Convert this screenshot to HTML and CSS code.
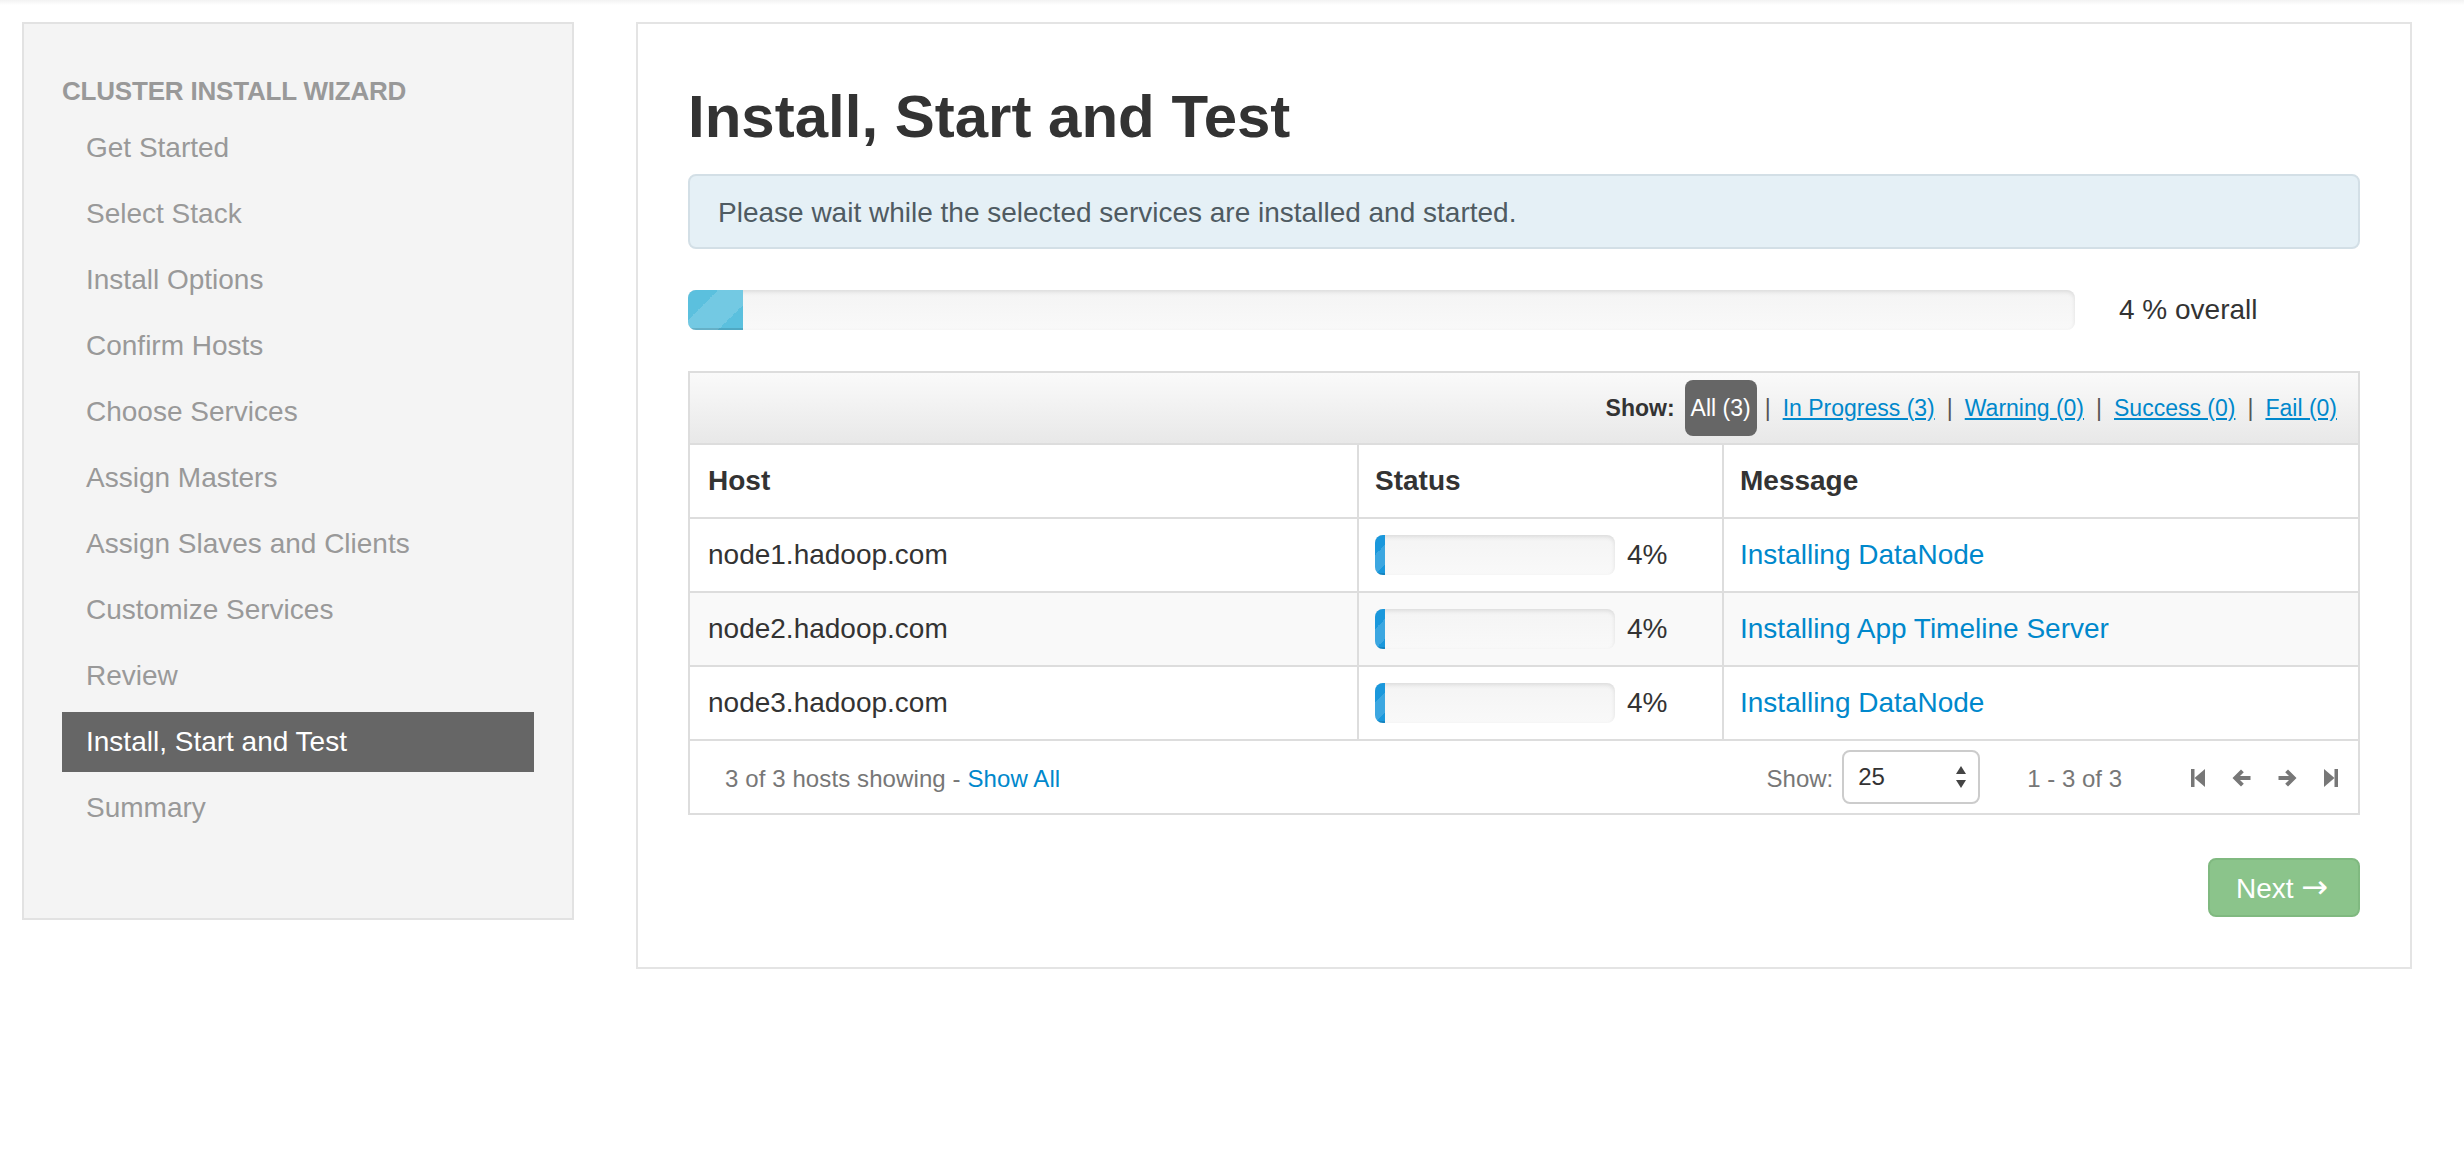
FILE: index.html
```html
<!DOCTYPE html>
<html lang="en">
<head>
<meta charset="utf-8">
<title>Cluster Install Wizard - Install, Start and Test</title>
<link rel="stylesheet" href="styles.css">
</head>
<body>
<div class="page">
  <aside class="sidebar">
    <div class="nav-header">CLUSTER INSTALL WIZARD</div>
    <ul class="nav-list">
      <li><a href="#">Get Started</a></li>
      <li><a href="#">Select Stack</a></li>
      <li><a href="#">Install Options</a></li>
      <li><a href="#">Confirm Hosts</a></li>
      <li><a href="#">Choose Services</a></li>
      <li><a href="#">Assign Masters</a></li>
      <li><a href="#">Assign Slaves and Clients</a></li>
      <li><a href="#">Customize Services</a></li>
      <li><a href="#">Review</a></li>
      <li class="active"><a href="#">Install, Start and Test</a></li>
      <li><a href="#">Summary</a></li>
    </ul>
  </aside>

  <main class="panel">
    <h2 class="title">Install, Start and Test</h2>
    <div class="alert">Please wait while the selected services are installed and started.</div>

    <div class="overall">
      <div class="progress">
        <div class="bar bar-info" style="width:4%"></div>
      </div>
      <div class="overall-text">4 % overall</div>
    </div>

    <div class="hosts">
      <div class="toolbar">
        <span class="show-label">Show:</span>
        <span class="pill">All (3)</span>
        <span class="sep">|</span>
        <a href="#" class="filter">In Progress (3)</a>
        <span class="sep">|</span>
        <a href="#" class="filter">Warning (0)</a>
        <span class="sep">|</span>
        <a href="#" class="filter">Success (0)</a>
        <span class="sep">|</span>
        <a href="#" class="filter">Fail (0)</a>
      </div>
      <table class="host-table">
        <thead>
          <tr>
            <th class="c-host">Host</th>
            <th class="c-status">Status</th>
            <th class="c-msg">Message</th>
          </tr>
        </thead>
        <tbody>
          <tr>
            <td>node1.hadoop.com</td>
            <td>
              <div class="cell-progress">
                <div class="progress small"><div class="bar bar-blue" style="width:4%"></div></div>
                <span>4%</span>
              </div>
            </td>
            <td><a href="#" class="msg">Installing DataNode</a></td>
          </tr>
          <tr>
            <td>node2.hadoop.com</td>
            <td>
              <div class="cell-progress">
                <div class="progress small"><div class="bar bar-blue" style="width:4%"></div></div>
                <span>4%</span>
              </div>
            </td>
            <td><a href="#" class="msg">Installing App Timeline Server</a></td>
          </tr>
          <tr>
            <td>node3.hadoop.com</td>
            <td>
              <div class="cell-progress">
                <div class="progress small"><div class="bar bar-blue" style="width:4%"></div></div>
                <span>4%</span>
              </div>
            </td>
            <td><a href="#" class="msg">Installing DataNode</a></td>
          </tr>
        </tbody>
      </table>
      <div class="tfoot">
        <div class="tfoot-left">3 of 3 hosts showing - <a href="#" class="show-all">Show All</a></div>
        <div class="tfoot-right">
          <span class="show-text">Show:</span>
          <div class="select">
            <span>25</span>
            <svg class="select-arrows" width="10" height="22" viewBox="0 0 10 22"><polygon points="5,0 10,8 0,8" fill="#444"/><polygon points="0,14 10,14 5,22" fill="#444"/></svg>
          </div>
          <span class="range">1 - 3 of 3</span>
          <div class="pager">
            <svg width="14" height="20" viewBox="0 0 14 20"><rect x="0" y="1" width="3.5" height="18" fill="#777"/><polygon points="14,1 3.5,10 14,19" fill="#777"/></svg>
            <svg width="19" height="20" viewBox="0 0 19 20"><path d="M0.5 10 L9 1.5 L11.8 4.3 L8 8 H18.5 V12 H8 L11.8 15.7 L9 18.5 Z" fill="#777"/></svg>
            <svg width="19" height="20" viewBox="0 0 19 20"><path d="M18.5 10 L10 1.5 L7.2 4.3 L11 8 H0.5 V12 H11 L7.2 15.7 L10 18.5 Z" fill="#777"/></svg>
            <svg width="14" height="20" viewBox="0 0 14 20"><polygon points="0,1 10.5,10 0,19" fill="#777"/><rect x="10.5" y="1" width="3.5" height="18" fill="#777"/></svg>
          </div>
        </div>
      </div>
    </div>

    <div class="actions">
      <button class="btn-next" type="button">Next <span class="arrow">&rarr;</span></button>
    </div>
  </main>
</div>
</body>
</html>
```

FILE: styles.css
```css
html, body {
  margin: 0;
}

body {
  font-family: "Liberation Sans", Arial, Helvetica, sans-serif;
  color: #333;
  background: #fff linear-gradient(#f2f2f2, #fff 5px) no-repeat;
}

.page {
  display: flex;
  align-items: flex-start;
  gap: 62px;
  padding: 22px 52px 40px 22px;
}

/* ---------- sidebar ---------- */
.sidebar {
  width: 552px;
  flex: none;
  box-sizing: border-box;
  background: #f4f4f4;
  border: 2px solid #e2e2e2;
  padding: 47px 38px 80px;
}

.nav-header {
  font-size: 26px;
  font-weight: bold;
  line-height: 40px;
  color: #999;
  margin-bottom: 7px;
  letter-spacing: -0.2px;
}

.nav-list {
  list-style: none;
  margin: 0;
  padding: 0;
  display: flex;
  flex-direction: column;
  gap: 6px;
}

.nav-list a {
  display: block;
  padding: 0 24px;
  line-height: 60px;
  font-size: 28px;
  color: #999;
  text-decoration: none;
}

.nav-list .active a {
  background: #666;
  color: #fff;
}

/* ---------- main panel ---------- */
.panel {
  flex: 1;
  min-width: 0;
  box-sizing: border-box;
  border: 2px solid #e4e4e4;
  padding: 49px 50px 50px;
}

.title {
  margin: 0 0 13px;
  font-size: 60px;
  line-height: 88px;
  font-weight: bold;
  color: #333;
}

.alert {
  border: 2px solid #d3dfe6;
  background: #e5f0f6;
  border-radius: 8px;
  padding: 17px 28px 14px;
  font-size: 28px;
  line-height: 40px;
  color: #4f5b62;
  margin-bottom: 41px;
}

.overall {
  display: grid;
  grid-template-columns: 1387px 1fr;
  align-items: center;
  margin-bottom: 41px;
}

.overall-text {
  padding-left: 44px;
  font-size: 28px;
  line-height: 40px;
  color: #333;
}

.progress {
  height: 40px;
  border-radius: 8px;
  background: linear-gradient(#f4f4f4, #f9f9f9);
  box-shadow: inset 0 2px 4px rgba(0, 0, 0, 0.1);
  overflow: hidden;
}

.bar {
  height: 100%;
  box-sizing: border-box;
}

.bar-info {
  background-color: #5bc0de;
  background-image: linear-gradient(-45deg,
    rgba(255, 255, 255, 0.15) 25%, transparent 25%,
    transparent 50%, rgba(255, 255, 255, 0.15) 50%,
    rgba(255, 255, 255, 0.15) 75%, transparent 75%, transparent);
  background-size: 80px 80px;
  background-position: -10px 0;
  box-shadow: inset 0 -2px 0 rgba(0, 0, 0, 0.12);
}

.bar-blue {
  background-color: #1a98dc;
  background-image: linear-gradient(-45deg,
    rgba(255, 255, 255, 0.15) 25%, transparent 25%,
    transparent 50%, rgba(255, 255, 255, 0.15) 50%,
    rgba(255, 255, 255, 0.15) 75%, transparent 75%, transparent);
  background-size: 40px 40px;
  box-shadow: inset 0 -2px 0 rgba(0, 0, 0, 0.12);
}

/* ---------- hosts table ---------- */
.hosts {
  border: 2px solid #ddd;
  margin-bottom: 43px;
}

.toolbar {
  height: 70px;
  display: flex;
  align-items: center;
  justify-content: flex-end;
  padding-right: 21px;
  background: linear-gradient(#fafafa, #e8e8e8);
  border-bottom: 2px solid #ddd;
  font-size: 23px;
  color: #333;
}

.show-label {
  font-weight: bold;
  margin-right: 10px;
}

.pill {
  background: #666;
  color: #fff;
  border-radius: 8px;
  padding: 0 6px;
  line-height: 56px;
  margin-right: -4px;
}

.sep {
  margin: 0 12px;
  color: #555;
}

.filter {
  color: #0088cc;
  text-decoration: underline;
}

.host-table {
  width: 100%;
  border-collapse: separate;
  border-spacing: 0;
  table-layout: fixed;
}

.host-table th,
.host-table td {
  box-sizing: border-box;
  padding: 16px;
  line-height: 40px;
  font-size: 28px;
  text-align: left;
  border-bottom: 2px solid #ddd;
  vertical-align: middle;
  white-space: nowrap;
  color: #333;
}

.host-table th:first-child,
.host-table td:first-child {
  padding-left: 18px;
}

.host-table th + th,
.host-table td + td {
  border-left: 2px solid #ddd;
}

.host-table th {
  font-weight: bold;
}

.c-host { width: 667px; }
.c-status { width: 365px; }

.host-table tbody tr:nth-child(even) td {
  background: #f9f9f9;
}

.cell-progress {
  display: flex;
  align-items: center;
  gap: 12px;
}

.progress.small {
  width: 240px;
  flex: none;
}

.msg {
  color: #0088cc;
  text-decoration: none;
}

.tfoot {
  display: flex;
  align-items: center;
  justify-content: space-between;
  height: 72px;
  box-sizing: border-box;
  padding: 4px 20px 0 35px;
  font-size: 24px;
  color: #777;
}

.tfoot-left {
  letter-spacing: 0.1px;
}

.show-all {
  color: #0088cc;
  text-decoration: none;
}

.tfoot-right {
  display: flex;
  align-items: center;
}

.show-text {
  margin-right: 9px;
}

.select {
  width: 138px;
  height: 54px;
  box-sizing: border-box;
  border: 2px solid #ccc;
  border-radius: 8px;
  background: #fff;
  display: flex;
  align-items: center;
  justify-content: space-between;
  padding: 0 12px 0 14px;
  color: #333;
  margin-top: -4px;
  margin-right: 47px;
}

.range {
  margin-right: 69px;
}

.pager {
  display: flex;
  align-items: center;
  gap: 27px;
  margin-top: -2px;
}

/* ---------- actions ---------- */
.actions {
  display: flex;
  justify-content: flex-end;
}

.btn-next {
  width: 152px;
  height: 59px;
  padding: 0 0 0 26px;
  text-align: left;
  border: 2px solid #80b980;
  border-radius: 8px;
  background: #8bc48b;
  color: #fff;
  font-family: "Liberation Sans", Arial, Helvetica, sans-serif;
  font-size: 28px;
  cursor: default;
}

.btn-next .arrow {
  font-family: "DejaVu Sans", "Liberation Sans", sans-serif;
  font-size: 32px;
  line-height: 1;
}
```
